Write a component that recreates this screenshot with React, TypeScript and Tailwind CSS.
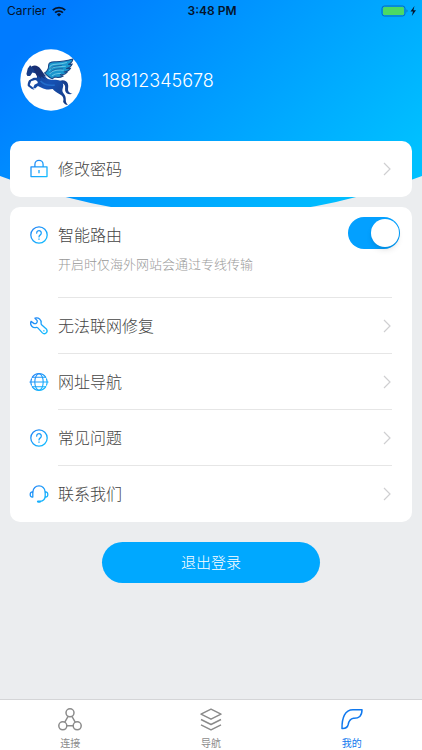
import { useState } from 'react';
import type { ReactNode } from 'react';

const Icon = ({ children }: { children: ReactNode }) => (
  <svg width="20" height="20" viewBox="0 0 20 20" fill="none" stroke="url(#iconBlue)" strokeWidth="1.3" strokeLinecap="round" strokeLinejoin="round" className="shrink-0" aria-hidden="true">
    {children}
  </svg>
);

const LockIcon = () => (
  <Icon>
    <path d="M2 7.8h16v9.8H2zM5.9 7.600V5.400a4.100 4.100 0 0 1 8.200 0V7.600M10 11v3.200" strokeLinecap="butt" />
  </Icon>
);

const HelpIcon = () => (
  <Icon>
    <circle cx="10" cy="10" r="8.2" />
    <path d="M7.7 8.1a2.3 2.3 0 1 1 3.6 1.8c-.9.6-1.3 1-1.3 2M10 14v.3" />
  </Icon>
);

const WrenchIcon = () => (
  <Icon>
    <path d="M6 2.200l2.200 2.400c.5 1.800-1.200 3.400-3 3L2 5.400C.6 9.200 3.800 12.600 7.400 11.400c.6-.1 1 .1 1.400.5l4.600 5c2.300 2.200 6-.9 4.200-3.600l-5-4.600c-.5-.5-.6-1-.5-1.600C12.600 3.800 9.600 1 6 2.200z" />
    <path d="M14.900 14.700v.2" />
  </Icon>
);

const GlobeIcon = () => (
  <Icon>
    <path d="M3.200 5.300a8.200 8.200 0 0 1 13.600 0M1.900 10a8.200 8.200 0 0 1 .6-3.100M18.100 10a8.200 8.200 0 0 0-.6-3.100M3.200 14.700a8.200 8.200 0 0 0 13.600 0M1.900 10c0 1.100.2 2.100.6 3.100M18.100 10c0 1.100-.2 2.100-.6 3.100" strokeWidth="1.2" />
    <ellipse cx="10" cy="10" rx="4.2" ry="8.2" strokeWidth="1.1" />
    <path d="M.9 10h18.200M3.600 5.300h12.800M3.600 14.700h12.800" strokeWidth="1.1" />
  </Icon>
);

const HeadsetIcon = () => (
  <Icon>
    <path d="M3.800 8C4.400 4 6.800 1.900 10 1.900S15.600 4 16.200 8" />
    <path d="M3.800 8v5c-1.700.3-2.600-.8-2.600-2.500S2.100 7.700 3.800 8zM16.200 8v5c1.700.3 2.600-.8 2.600-2.500S17.900 7.700 16.200 8z" />
    <path d="M16.200 13c-.6 2.500-2.200 4-4.800 4.400" />
    <path d="M9 17.600h2" strokeWidth="2.200" />
  </Icon>
);

const Chevron = () => (
  <svg width="10" height="14" viewBox="0 0 10 14" fill="none" stroke="#cfcfd1" strokeWidth="1.2" aria-hidden="true">
    <path d="M2 1l6 6-6 6" />
  </svg>
);

const PegasusLogo = () => (
  <svg viewBox="31 27 184 184" className="h-[62px] w-[62px]" role="img" aria-label="Pegasus">
    <circle cx="123" cy="119" r="91" fill="#fff" />
    <path
      d="M148 122C159 117 170 121 173 130C176 139 172 145 174 151C176 156 181 159 187 160C176 164 166 159 165 150C164 142 167 136 162 132C158 129 153 131 148 132Z"
      fill="#17408f"
    />
    <path
      d="M61 75L66 80C76 77 85 82 91 89C98 97 103 108 113 115C122 120 134 116 146 120C158 124 162 133 158 143C156 150 156 154 161 160C166 166 167 172 167 180C167 185 169 188 173 193C166 193 163 190 159 184L160 176C159 168 156 165 149 161C140 157 133 152 128 146C115 149 104 147 95 142L84 137L76 144L70 142L74 133L84 128L82 122L76 119L64 123L60 134L68 140L74 148L66 146L54 137C53 131 55 125 58 120L72 112L81 112C83 106 82 102 78 100L68 97L61 107L53 107L50 101L54 85Z"
      fill="url(#horse)"
    />
    <path d="M66 78C77 73 86 78 91 85C98 93 100 101 110 109L99 106L106 116L92 108L94 116L84 104L84 113C77 101 74 88 66 78Z" fill="#182f73" />
    <path
      d="M104 98C112 93 116 85 116 75C116 67 123 65 134 65C154 66 170 62 188 57C187 66 181 70 174 73L186 72C183 80 176 83 168 85L181 84C177 92 170 94 161 95L171 96C166 103 159 104 150 103L159 107C151 112 142 112 134 110L127 115C119 113 112 107 104 98Z"
      fill="#1a96ce"
      stroke="#174383"
      strokeWidth="3"
    />
    <path d="M119 82c1-8 8-10 20-10 11 0 21-2 31-5M118 92c4-10 13-12 27-12l22-2M119 101c7-10 18-13 42-11M126 107c7-7 14-9 26-7" fill="none" stroke="#68c5e5" strokeWidth="3" />
    <path d="M121 87c8-9 16-10 34-11M121 97c8-10 20-12 38-11" fill="none" stroke="#174b8f" strokeWidth="2" />
    <path d="M92 122c11 12 25 14 42 12" fill="none" stroke="#236dcb" strokeWidth="5" />
  </svg>
);

const StatusBar = () => (
  <div className="grid h-[22px] grid-cols-3 items-center pl-[7px] pr-[5px] text-[#05142b]">
    <div className="flex items-center gap-[6px] text-[12px] leading-5">
      Carrier
      <svg width="14" height="11" viewBox="0 0 14 11" fill="none" stroke="currentColor" strokeWidth="1.900" aria-hidden="true">
        <path d="M.8 4.200a8.700 8.700 0 0 1 12.400 0M3.100 6.700a5.500 5.500 0 0 1 7.800 0" />
        <path d="M7 10.500L4.900 8.400a3 3 0 0 1 4.200 0z" fill="currentColor" stroke="none" />
      </svg>
    </div>
    <div className="whitespace-nowrap text-center text-[12px] font-semibold leading-5">3:48 PM</div>
    <svg width="36" height="12" viewBox="0 0 36 12" className="justify-self-end" aria-hidden="true">
      <rect x="1" y="1" width="23" height="10" rx="2.500" fill="none" stroke="#0a6cb8" />
      <rect x="2" y="2" width="21" height="8" rx="1.500" fill="#4cd964" />
      <path d="M25.500 4.300q2 1.700 0 3.400z" fill="#0a6cb8" />
      <path d="M33.500 1l-4 5.600h2.500L30.800 11l4.200-5.800h-2.600z" fill="currentColor" />
    </svg>
  </div>
);

const menuItems = [
  { label: '无法联网修复', icon: <WrenchIcon /> },
  { label: '网址导航', icon: <GlobeIcon /> },
  { label: '常见问题', icon: <HelpIcon /> },
  { label: '联系我们', icon: <HeadsetIcon /> },
];

const tabs = [
  {
    label: '连接',
    icon: (
      <>
        <circle cx="12" cy="4.800" r="4" />
        <circle cx="4.800" cy="17.800" r="4" />
        <circle cx="19.200" cy="17.800" r="4" />
        <path d="M10 8.500l-3.200 5.600M14 8.500l3.200 5.600M8.800 17.800h6.400" />
      </>
    ),
  },
  {
    label: '导航',
    icon: <path d="M12 1.200l10 5-10 5-10-5zM2 11.500l10 5 10-5M2 16.800l10 5 10-5" />,
  },
  {
    label: '我的',
    icon: <path d="M22 1.800H13C4.800 1.800 1.900 10 2 20.500c3.500.2 5.500-1 6.200-4 .8-4 2.300-5.800 5.300-6.200C19 10.500 22 8 22 1.800z" />,
  },
];

const MenuRow = ({ label, icon }: { label: string; icon: ReactNode }) => (
  <button type="button" className="flex h-14 w-full items-center gap-[9px] pl-[19px] text-left">
    {icon}
    <span className="flex flex-1 items-center justify-between self-stretch pr-5">
      {label}
      <Chevron />
    </span>
  </button>
);

const App = () => {
  const [smartRoute, setSmartRoute] = useState(true);
  const [activeTab, setActiveTab] = useState('我的');

  return (
    <div className="flex min-h-screen flex-col bg-[#ebedef] font-[Inter,'Noto_Sans_CJK_SC',sans-serif]">
      <svg width="0" height="0" className="absolute" aria-hidden="true">
        <defs>
          <linearGradient id="iconBlue" gradientUnits="userSpaceOnUse" x1="3" y1="2" x2="17" y2="18">
            <stop stopColor="#2384f5" />
            <stop offset="1" stopColor="#12bdff" />
          </linearGradient>
          <linearGradient id="horse" x1="0" y1="0" x2="1" y2="1">
            <stop stopColor="#183579" />
            <stop offset=".5" stopColor="#1652b5" />
            <stop offset="1" stopColor="#14377f" />
          </linearGradient>
        </defs>
      </svg>

      <div className="grid flex-1 grid-cols-1 content-start">
        <svg viewBox="0 0 422 215" preserveAspectRatio="none" className="h-[215px] w-full [grid-area:1/1]" aria-hidden="true">
          <defs>
            <linearGradient id="sky" gradientUnits="userSpaceOnUse" x1="70" y1="0" x2="310" y2="250">
              <stop stopColor="#007bff" />
              <stop offset="1" stopColor="#00c0ff" />
            </linearGradient>
          </defs>
          <path d="M0 0H422V176Q211 256 0 176z" fill="url(#sky)" />
        </svg>

        <div className="[grid-area:1/1]">
          <StatusBar />
          <header className="flex h-[119px] items-center gap-5 px-5 pb-[3px]">
            <PegasusLogo />
            <p className="text-[18px] font-light text-white">18812345678</p>
          </header>

          <main className="px-[10px] text-[16px] font-light text-[#444]">
            <section className="rounded-[10px] bg-white">
              <MenuRow label="修改密码" icon={<LockIcon />} />
            </section>

            <section className="mt-[10px] rounded-[10px] bg-white">
              <div className="flex h-[91px] items-start gap-[9px] pl-[19px] pt-[10px]">
                <div className="pt-2">
                  <HelpIcon />
                </div>
                <div className="flex-1 pt-[6px]">
                  <label htmlFor="smart-route" className="block leading-6">智能路由</label>
                  <p className="mt-[7px] text-[13px] leading-5 text-[#999]">开启时仅海外网站会通过专线传输</p>
                </div>
                <input
                  id="smart-route"
                  type="checkbox"
                  role="switch"
                  checked={smartRoute}
                  onChange={(e) => setSmartRoute(e.target.checked)}
                  className="mr-3 flex h-8 w-[52px] shrink-0 appearance-none items-center rounded-full bg-[#ccc] px-px before:block before:h-7 before:w-7 before:rounded-full before:bg-white before:shadow-md checked:justify-end checked:bg-[#03a0ff]"
                />
              </div>
              {menuItems.map((item) => (
                <div key={item.label}>
                  <hr className="-mt-px ml-12 mr-5 border-[#e6e6e6]" />
                  <MenuRow label={item.label} icon={item.icon} />
                </div>
              ))}
            </section>

            <button type="button" className="mx-auto mt-5 block h-[41px] w-[218px] rounded-full bg-[#00a8ff] pt-[2px] text-[15px] text-white">
              退出登录
            </button>
          </main>
        </div>
      </div>

      <nav className="grid h-[51px] grid-cols-3 border-t border-[#d4d5d7] bg-white">
        {tabs.map((tab) => (
          <button
            key={tab.label}
            type="button"
            onClick={() => setActiveTab(tab.label)}
            className={`flex flex-col items-center pt-2 text-[10px] leading-4 ${activeTab === tab.label ? 'text-[#0f78ee]' : 'text-[#8b8b8b]'}`}
          >
            <svg width="24" height="24" viewBox="0 0 24 24" fill="none" stroke="currentColor" strokeWidth="1.500" strokeLinejoin="round" aria-hidden="true">
              {tab.icon}
            </svg>
            <span className="mt-[3px]">{tab.label}</span>
          </button>
        ))}
      </nav>
    </div>
  );
};

export default App;
